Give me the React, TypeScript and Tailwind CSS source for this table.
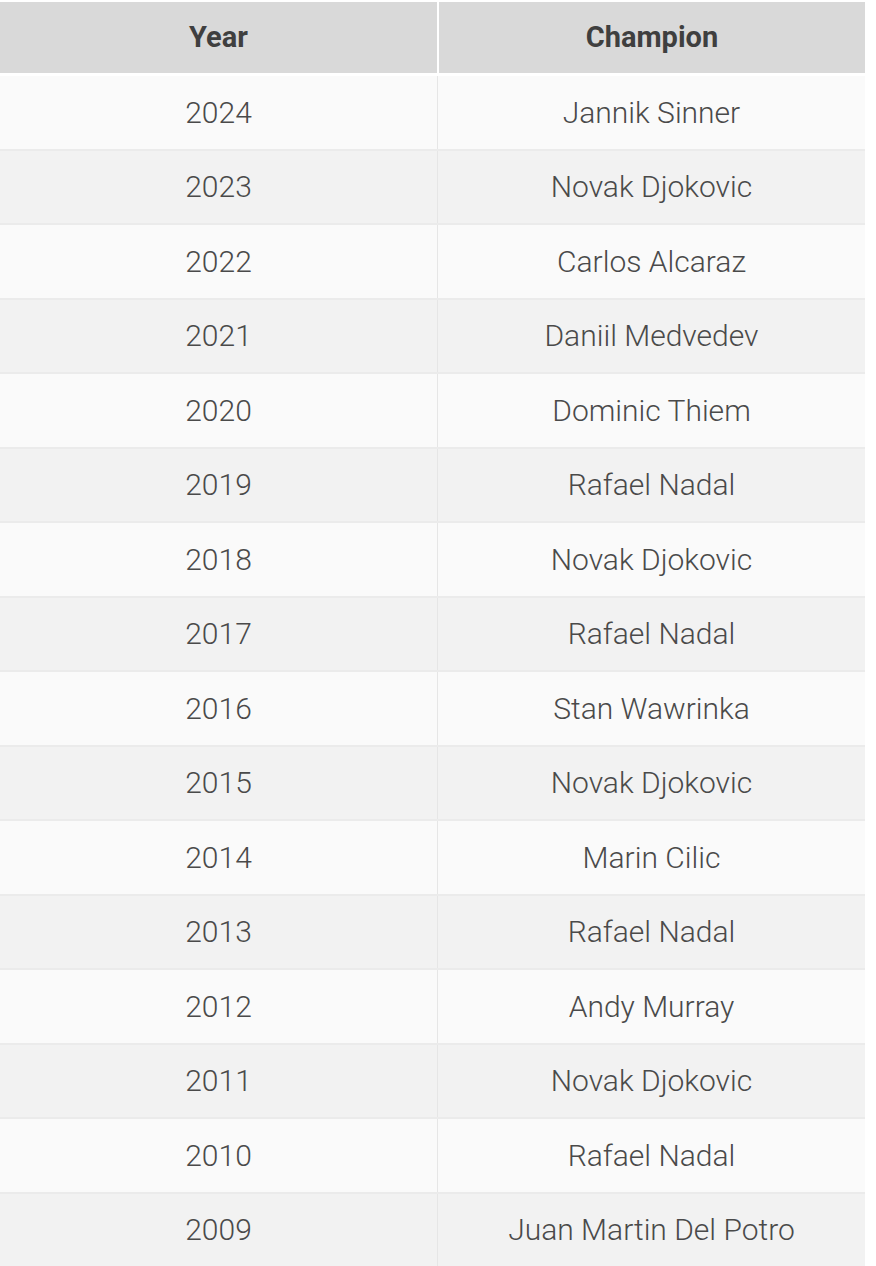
const rows: [string, string][] = [
  ['2024', 'Jannik Sinner'],
  ['2023', 'Novak Djokovic'],
  ['2022', 'Carlos Alcaraz'],
  ['2021', 'Daniil Medvedev'],
  ['2020', 'Dominic Thiem'],
  ['2019', 'Rafael Nadal'],
  ['2018', 'Novak Djokovic'],
  ['2017', 'Rafael Nadal'],
  ['2016', 'Stan Wawrinka'],
  ['2015', 'Novak Djokovic'],
  ['2014', 'Marin Cilic'],
  ['2013', 'Rafael Nadal'],
  ['2012', 'Andy Murray'],
  ['2011', 'Novak Djokovic'],
  ['2010', 'Rafael Nadal'],
  ['2009', 'Juan Martin Del Potro'],
];

export default function App() {
  return (
    <div className="min-h-screen bg-white pt-[2px] font-['Roboto',sans-serif]">
      <div className="w-[865px]">
        {/* header */}
        <div className="grid h-[74px] grid-cols-[437px_1fr] border-b-[3px] border-white bg-[#d9d9d9] text-[29px] font-bold text-[#3f3f3f]">
          <div className="flex items-center justify-center">Year</div>
          <div className="flex items-center justify-center border-l-2 border-white">Champion</div>
        </div>

        {rows.map(([year, name], i) => (
          <div
            key={year}
            className={`grid h-[74.5px] grid-cols-[437px_1fr] border-b-2 border-[#ebebeb] text-[30px] font-light text-[#4a4a4a] ${
              i % 2 === 0 ? 'bg-[#fafafa]' : 'bg-[#f2f2f2]'
            }`}
          >
            <div className="flex items-center justify-center">{year}</div>
            <div className="flex items-center justify-center border-l border-[#e6e6e6]">{name}</div>
          </div>
        ))}
      </div>
    </div>
  );
}
